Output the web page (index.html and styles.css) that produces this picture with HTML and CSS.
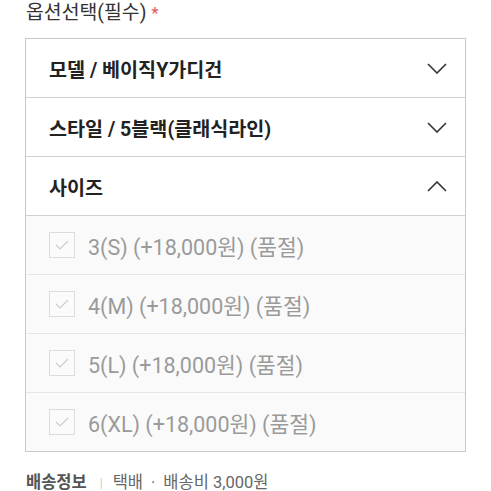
FILE: index.html
```html
<!DOCTYPE html>
<html lang="ko">
<head>
<meta charset="utf-8">
<link rel="stylesheet" href="styles.css">
</head>
<body>
<div class="page">
  <div class="title">옵션선택(필수) <span class="req">*</span></div>
  <div class="box">
    <div class="head">
      <span class="label">모델 / 베이직Y가디건</span>
      <svg class="chev" width="20" height="11" viewBox="0 0 20 11"><path d="M1 1 L10 10 L19 1" fill="none" stroke="#333" stroke-width="1.6"/></svg>
    </div>
    <div class="head">
      <span class="label">스타일 / 5블랙(클래식라인)</span>
      <svg class="chev" width="20" height="11" viewBox="0 0 20 11"><path d="M1 1 L10 10 L19 1" fill="none" stroke="#333" stroke-width="1.6"/></svg>
    </div>
    <div class="head">
      <span class="label">사이즈</span>
      <svg class="chev" width="20" height="11" viewBox="0 0 20 11"><path d="M1 10 L10 1 L19 10" fill="none" stroke="#333" stroke-width="1.6"/></svg>
    </div>
    <div class="item"><span class="cb"><svg width="14" height="10" viewBox="0 0 14 10"><path d="M1 5 L5 9 L13 1" fill="none" stroke="#ccc" stroke-width="1.2"/></svg></span><span class="opt">3(S) (+18,000원) (품절)</span></div>
    <div class="item"><span class="cb"><svg width="14" height="10" viewBox="0 0 14 10"><path d="M1 5 L5 9 L13 1" fill="none" stroke="#ccc" stroke-width="1.2"/></svg></span><span class="opt">4(M) (+18,000원) (품절)</span></div>
    <div class="item"><span class="cb"><svg width="14" height="10" viewBox="0 0 14 10"><path d="M1 5 L5 9 L13 1" fill="none" stroke="#ccc" stroke-width="1.2"/></svg></span><span class="opt">5(L) (+18,000원) (품절)</span></div>
    <div class="item"><span class="cb"><svg width="14" height="10" viewBox="0 0 14 10"><path d="M1 5 L5 9 L13 1" fill="none" stroke="#ccc" stroke-width="1.2"/></svg></span><span class="opt">6(XL) (+18,000원) (품절)</span></div>
  </div>
  <div class="ship"><span class="ship-label">배송정보</span><span class="bar">|</span><span class="ship-text">택배<span class="dot">·</span>배송비 3,000원</span></div>
</div>
</body>
</html>
```
FILE: styles.css
```css
html, body {
  margin: 0;
  padding: 0;
  background: #fff;
}
body {
  font-family: Roboto, "Noto Sans CJK KR", sans-serif;
  color: #222;
}
.page {
  padding: 0 25px;
}
.title {
  height: 26px;
  line-height: 26px;
  font-size: 19.4px;
  color: #333;
  padding-left: 1px;
}
.req {
  color: #e2585a;
  font-size: 17px;
}
.box {
  margin-top: 12px;
  border: 1px solid #c8c8c8;
  width: 439px;
}
.head {
  height: 58px;
  display: flex;
  align-items: center;
  justify-content: space-between;
  padding: 0 18px 0 23px;
  border-bottom: 1px solid #d0d0d0;
  background: #fff;
}
.label {
  font-size: 19.6px;
  font-weight: 700;
  color: #222;
}
.chev {
  display: block;
}
.item {
  height: 58px;
  display: flex;
  align-items: center;
  padding-left: 23px;
  background: #fafafa;
  border-bottom: 1px solid #e6e6e6;
}
.item:last-child {
  border-bottom: none;
}
.cb {
  width: 24px;
  height: 24px;
  border: 1px solid #dcdcdc;
  background: #fbfbfb;
  display: flex;
  align-items: center;
  justify-content: center;
  margin-right: 13px;
}
.opt {
  font-size: 21.5px;
  color: #9a9a9a;
}
.ship {
  margin-top: 22px;
  height: 18px;
  line-height: 18px;
  font-size: 16.5px;
  display: flex;
  align-items: center;
  padding-left: 1px;
}
.ship-label {
  color: #555;
  font-weight: 700;
}
.bar {
  color: #ccc;
  font-size: 12px;
  margin: 0 10px 0 13px;
}
.ship-text {
  color: #666;
}
.dot {
  margin: 0 8px;
}
```
